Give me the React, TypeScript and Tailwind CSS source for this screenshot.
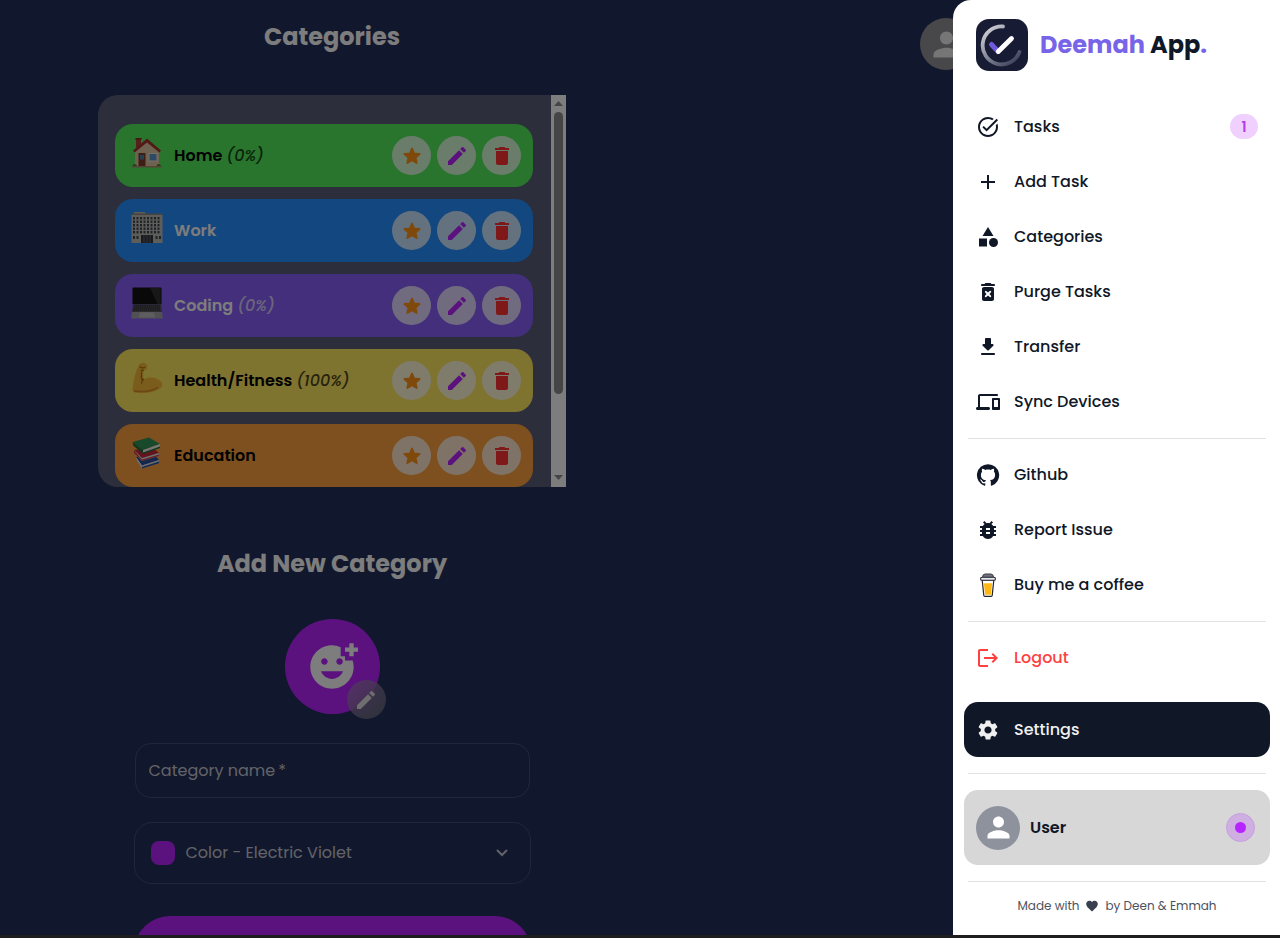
import type { ReactNode } from "react";
import {
  MdAdd,
  MdAddReaction,
  MdBugReport,
  MdCategory,
  MdDelete,
  MdEdit,
  MdFavorite,
  MdLogout,
  MdPerson,
  MdSettings,
  MdTaskAlt,
} from "react-icons/md";

function Glyph({ d, size = 24 }: { d: string; size?: number }) {
  return (
    <svg width={size} height={size} viewBox="0 0 24 24" fill="currentColor" aria-hidden="true">
      <path d={d} />
    </svg>
  );
}

const starPath =
  "M12 17.27l4.15 2.51c.76.46 1.69-.22 1.49-1.08l-1.1-4.72 3.67-3.18c.67-.58.31-1.68-.57-1.75l-4.83-.41-1.89-4.46c-.34-.81-1.5-.81-1.84 0L9.19 8.63l-4.83.41c-.88.07-1.24 1.17-.57 1.75l3.67 3.18-1.1 4.72c-.2.86.73 1.54 1.49 1.08l4.15-2.5z";
const purgePath =
  "M6 19c0 1.1.9 2 2 2h8c1.1 0 2-.9 2-2V9c0-1.1-.9-2-2-2H8c-1.1 0-2 .9-2 2v10zm3.17-7.83a1 1 0 0 1 1.41 0L12 12.59l1.42-1.42a1 1 0 1 1 1.41 1.41L13.41 14l1.42 1.42a1 1 0 1 1-1.41 1.41L12 15.41l-1.42 1.42a1 1 0 1 1-1.41-1.41L10.59 14l-1.42-1.42a1 1 0 0 1 0-1.41zM18 4h-2.5l-.71-.71c-.18-.18-.44-.29-.7-.29H9.91c-.26 0-.52.11-.7.29L8.5 4H6c-.55 0-1 .45-1 1s.45 1 1 1h12c.55 0 1-.45 1-1s-.45-1-1-1z";
const transferPath =
  "M16.59 9H15V4c0-.55-.45-1-1-1h-4c-.55 0-1 .45-1 1v5H7.41c-.89 0-1.34 1.08-.71 1.71l4.59 4.59c.39.39 1.02.39 1.41 0l4.59-4.59c.63-.63.19-1.71-.7-1.71zM5 19c0 .55.45 1 1 1h12c.55 0 1-.45 1-1s-.45-1-1-1H6c-.55 0-1 .45-1 1z";
const devicesPath =
  "M4 6h17c.55 0 1-.45 1-1s-.45-1-1-1H4c-1.1 0-2 .9-2 2v11h-.5c-.83 0-1.5.67-1.5 1.5S.67 20 1.5 20h11c.83 0 1.5-.67 1.5-1.5s-.67-1.5-1.5-1.5H4V6zm19 2h-6c-.55 0-1 .45-1 1v10c0 .55.45 1 1 1h6c.55 0 1-.45 1-1V9c0-.55-.45-1-1-1zm-1 9h-4v-7h4v7z";
const githubPath =
  "M12 1.27a11 11 0 00-3.48 21.46c.55.09.73-.28.73-.55v-1.84c-3.03.64-3.67-1.46-3.67-1.46-.55-1.29-1.28-1.65-1.28-1.65-.92-.65.1-.65.1-.65 1.1 0 1.73 1.1 1.73 1.1.92 1.65 2.57 1.2 3.21.92a2 2 0 01.64-1.47c-2.47-.27-5.04-1.19-5.04-5.5 0-1.1.46-2.1 1.2-2.84a3.76 3.76 0 010-2.93s.91-.28 3.11 1.1c1.8-.49 3.7-.49 5.5 0 2.1-1.38 3.02-1.1 3.02-1.1a3.76 3.76 0 01.1 2.93c.83.74 1.2 1.74 1.2 2.94 0 4.21-2.57 5.13-5.04 5.4.45.37.82.92.82 2.02v3.03c0 .27.1.64.73.55A11 11 0 0012 1.27";

function CoffeeCup() {
  return (
    <svg width="24" height="24" viewBox="0 0 24 24" aria-hidden="true">
      <path d="M6.200 7 7.800 22.500q.1 .9 1 .9h6.400q.9 0 1-.9L17.800 7z" fill="#fff" stroke="#23242c" strokeWidth="1.200" />
      <path d="M7.900 10.200h8.200L15 21.800H9z" fill="#ffb813" />
      <rect x="4.600" y="4.300" width="14.800" height="3" rx="1.400" fill="#e6e7ea" stroke="#23242c" strokeWidth="1.100" />
      <path d="M6.500 4.200Q6.800 1 9 1h6q2.200 0 2.500 3.200z" fill="#70737d" stroke="#3b3d47" strokeWidth="1" />
    </svg>
  );
}

function HouseEmoji() {
  return (
    <svg width="32" height="32" viewBox="0 0 32 32" aria-hidden="true">
      <rect x="5" y="1.5" width="5" height="9" fill="#b23f34" />
      <rect x="4.4" y="1" width="6.2" height="1.8" fill="#8d2f2a" />
      <path d="M4 15 16 4l12 11v15H4z" fill="#e0c4a2" />
      <path d="M16 1.5 2 13.500l1.600 2L16 5.500l12.400 10 1.600-2z" fill="#a5342f" />
      <rect x="7.500" y="16" width="7" height="14" fill="#7c3b28" />
      <rect x="9" y="18" width="4" height="4.500" fill="#4b7fa6" />
      <rect x="17.500" y="16" width="9" height="8.500" fill="#efe2cf" />
      <rect x="18.500" y="17" width="7" height="6.500" fill="#5a94c8" />
      <path d="M1 30q1-4 4-2.500l2 2.500zM25 30q1-4 4-2.500l2 2.500z" fill="#4e7a32" />
      <rect x="1" y="29" width="30" height="1.500" fill="#a98b6c" />
    </svg>
  );
}

const windowColumns = [3, 6.5, 10, 13.5, 17, 20.5, 24, 27.5];
const windowRows = [5, 8.5, 12, 15.5, 19];

function OfficeEmoji() {
  return (
    <svg width="32" height="32" viewBox="0 0 32 32" aria-hidden="true">
      <rect x="3" y="0" width="11" height="3" fill="#b9b7ad" />
      <rect x="0.500" y="1.500" width="31" height="2" fill="#8d8b84" />
      <rect x="0.500" y="3" width="31" height="28" fill="#bdbbb2" />
      {windowRows.map((y) =>
        windowColumns.map((x) => <rect key={`${x}-${y}`} x={x - 1} y={y} width="2" height="2.400" fill="#3c4654" />),
      )}
      <rect x="10" y="23" width="12" height="8" fill="#33363c" />
      <path d="M13 23v8M16 23v8M19 23v8" stroke="#8a8d92" strokeWidth=".6" />
      <path d="M3 24v3M6.500 24v3M25.500 24v3M29 24v3" stroke="#3c4654" strokeWidth="2" />
    </svg>
  );
}

function LaptopEmoji() {
  return (
    <svg width="32" height="32" viewBox="0 0 32 32" aria-hidden="true">
      <rect x="1.500" y="0.500" width="29" height="17" rx="1" fill="#121212" />
      <path d="M19 1h10.500v16h-3z" fill="#303030" />
      <path d="M2 17.500h28L31 25H1z" fill="#58595e" />
      <path d="M3 19h26M2.500 21h27M2.200 23h27.600" stroke="#202124" strokeWidth="1.200" strokeDasharray="1.600 .5" />
      <path d="M1 25h30l.8 6.500H.2z" fill="#a3a3a8" />
      <path d="M9 25.500h14l1 5H8z" fill="#bdbdc2" />
    </svg>
  );
}

function MuscleEmoji() {
  return (
    <svg width="32" height="32" viewBox="0 0 32 32" aria-hidden="true">
      <path
        d="M7.800 3.500C8.600 1 11.500.3 13.700 1.300c2.200.9 3 2.700 2.400 4.600-.5 1.500-1.800 2.300-3.300 2.100-.8 2.700-.9 6-.1 9.200 4.900-2.600 11.900-2.300 16.400 1.600 2.900 2.500 2.600 5.800-.7 8-6.400 4.200-15.900 5.100-24.400 3.700-1.900-.3-2.600-1.600-2.400-3.400C2.500 19.500 4.200 9.500 7.800 3.500z"
        fill="#f5b93a"
      />
      <path
        d="M12.700 17.200c-1.200 1.300-1.900 2.500-2.100 4M9 4.800c1.500 1.200 3.300 1.300 4.800.3M10 8c1 .5 1.900.5 2.800 0M10.800 9.500c-.8 3.500-.7 6.800.4 9.600"
        fill="none"
        stroke="#a96f16"
        strokeWidth="1.100"
        strokeLinecap="round"
      />
      <path d="M3 28.800c8 1.600 17 .6 24-3.300" fill="none" stroke="#d98f28" strokeWidth="1.500" />
    </svg>
  );
}

function BooksEmoji() {
  return (
    <svg width="32" height="32" viewBox="0 0 32 32" aria-hidden="true">
      <path d="m5 20 17-4 6 7-17 5.500z" fill="#284f9e" />
      <path d="m5 20 6 8.500L28 23v3l-17 5.500L6 24z" fill="#dbdde5" />
      <path d="m11 30 17-5.500v1.800L11 31.500z" fill="#284f9e" />
      <path d="m3 13 18-3 7 6-17 5z" fill="#c62b36" />
      <path d="m3 13 8 8 17-5v3L11 24l-7-7z" fill="#e9e3dc" />
      <path d="m11 22.500 17-5V19l-17 5-8-8v-3z" fill="#c62b36" opacity=".85" />
      <path d="M1.500 5 18 .5 29 7l-17 6z" fill="#2f9254" />
      <path d="m12 13 17-6v3.500L12 16z" fill="#efeee6" />
      <path d="M1.500 5 12 13v3.500L2.500 9z" fill="#1f6e3e" />
      <path d="m12 15.500 17-6v1.600L12 17z" fill="#1f6e3e" />
    </svg>
  );
}

type Category = { name: string; percent?: string; tone: string; icon: ReactNode };

const categories: Category[] = [
  { name: "Home", percent: "(0%)", tone: "bg-[#52ea5a] text-black", icon: <HouseEmoji /> },
  { name: "Work", tone: "bg-[#248eff] text-[#fafafa]", icon: <OfficeEmoji /> },
  { name: "Coding", percent: "(0%)", tone: "bg-[#865ef6] text-[#fafafa]", icon: <LaptopEmoji /> },
  { name: "Health/Fitness", percent: "(100%)", tone: "bg-[#ffe660] text-black", icon: <MuscleEmoji /> },
  { name: "Education", tone: "bg-[#ffa03e] text-black", icon: <BooksEmoji /> },
];

function RoundAction({ label, tone, children }: { label: string; tone: string; children: ReactNode }) {
  return (
    <button
      type="button"
      aria-label={label}
      className={`flex size-[39px] items-center justify-center rounded-full bg-white/75 ${tone}`}
    >
      {children}
    </button>
  );
}

function CategoryRow({ category }: { category: Category }) {
  return (
    <li className={`flex h-[63px] shrink-0 items-center rounded-[18px] pr-3 pl-4 ${category.tone}`}>
      <span className="mr-[11px] mb-[6px] shrink-0">{category.icon}</span>
      <span className="flex-1 text-base font-semibold">
        {category.name}
        {category.percent && <span className="ml-1 font-medium italic opacity-70">{category.percent}</span>}
      </span>
      <span className="flex gap-[6px]">
        <RoundAction label={`Favorite ${category.name}`} tone="text-[#ff9318]">
          <Glyph d={starPath} />
        </RoundAction>
        <RoundAction label={`Edit ${category.name}`} tone="text-[#b624ff]">
          <MdEdit size={24} />
        </RoundAction>
        <RoundAction label={`Delete ${category.name}`} tone="text-[#ff3131]">
          <MdDelete size={24} />
        </RoundAction>
      </span>
    </li>
  );
}

function ScrollTrack() {
  return (
    <div aria-hidden="true" className="flex w-[15px] shrink-0 flex-col items-center bg-[#fafafa]">
      <svg width="15" height="17" viewBox="0 0 15 17" fill="#8b8b8b">
        <path d="M3 11h9L7.500 6z" />
      </svg>
      <div className="h-[282px] w-[9px] rounded-full bg-[#8b8b8b]" />
      <div className="flex-1" />
      <svg width="15" height="17" viewBox="0 0 15 17" fill="#8b8b8b">
        <path d="M3 5h9l-4.500 5z" />
      </svg>
    </div>
  );
}

function NavItem({
  icon,
  label,
  tone = "text-[#101727]",
  badge,
}: {
  icon: ReactNode;
  label: string;
  tone?: string;
  badge?: string;
}) {
  return (
    <a href="#" className={`flex min-h-[55px] items-center rounded-[14px] px-3 text-base font-medium ${tone}`}>
      <span className="mr-[14px] flex size-6 items-center justify-center">{icon}</span>
      <span className="flex-1">{label}</span>
      {badge && (
        <span className="flex h-[25px] w-7 items-center justify-center rounded-full bg-[#efd0fe] text-sm font-semibold text-[#b33be8]">
          {badge}
        </span>
      )}
    </a>
  );
}

function Divider() {
  return <hr className="mx-1 border-t border-[#e1e1e3]" />;
}

function Drawer() {
  return (
    <aside className="absolute inset-y-0 right-0 flex w-[327px] flex-col rounded-tl-[18px] bg-white pr-[10px] pl-[11px]">
      <div className="mt-[19px] mb-[28px] flex items-center gap-3 px-3">
        <svg width="52" height="52" viewBox="0 0 52 52" aria-hidden="true">
          <defs>
            <linearGradient id="ring" x1="0.1" y1="0.1" x2="0.8" y2="1">
              <stop offset="0" stopColor="#c9cad2" />
              <stop offset="1" stopColor="#41455c" />
            </linearGradient>
          </defs>
          <rect width="52" height="52" rx="13" fill="#171c34" />
          <path
            d="M27 7.500A19 19 0 1 0 43.500 33"
            fill="none"
            stroke="url(#ring)"
            strokeWidth="3.800"
            strokeLinecap="round"
          />
          <path d="M15.500 25.500 22 32.500" stroke="#6f59dd" strokeWidth="5" strokeLinecap="round" />
          <path d="M22.300 32.500 35.500 19.500" stroke="#fff" strokeWidth="4.800" strokeLinecap="round" />
        </svg>
        <p className="text-2xl font-bold text-[#101727]">
          <span className="text-[#7764e8]">Deemah</span> App<span className="text-[#7764e8]">.</span>
        </p>
      </div>

      <nav className="flex flex-col">
        <NavItem icon={<MdTaskAlt size={24} />} label="Tasks" badge="1" />
        <NavItem icon={<MdAdd size={24} />} label="Add Task" />
        <NavItem icon={<MdCategory size={24} />} label="Categories" />
        <NavItem icon={<Glyph d={purgePath} />} label="Purge Tasks" />
        <NavItem icon={<Glyph d={transferPath} />} label="Transfer" />
        <NavItem icon={<Glyph d={devicesPath} />} label="Sync Devices" />
        <div className="mt-[9px] mb-2">
          <Divider />
        </div>
        <NavItem icon={<Glyph d={githubPath} />} label="Github" />
        <NavItem icon={<MdBugReport size={24} />} label="Report Issue" />
        <NavItem icon={<CoffeeCup />} label="Buy me a coffee" />
        <div className="mt-[9px] mb-2">
          <Divider />
        </div>
        <NavItem icon={<MdLogout size={24} />} label="Logout" tone="text-[#ff4040]" />
      </nav>

      <div className="mt-[17px] flex flex-col gap-4">
        <NavItem icon={<MdSettings size={24} />} label="Settings" tone="bg-[#101727] text-[#f0f0f0]" />
        <Divider />
        <button type="button" className="flex h-[75px] items-center rounded-[14px] bg-[#d7d7d7] pr-[15px] pl-3">
          <span className="mr-[10px] flex size-11 items-center justify-center rounded-full bg-[#8e929c] text-white">
            <MdPerson size={33} />
          </span>
          <span className="flex-1 text-left text-base font-semibold text-[#101727]">User</span>
          <span className="flex size-[29px] items-center justify-center rounded-full border border-[#c79fe0] bg-[#cfaee2]">
            <span className="size-[11px] rounded-full bg-[#b624ff]" />
          </span>
        </button>
        <Divider />
        <p className="flex items-center justify-center text-xs text-[#4d525e]">
          Made with <MdFavorite size={14} className="mx-[6px] text-[#3a404e]" /> by Deen &amp; Emmah
        </p>
      </div>
    </aside>
  );
}

export default function App() {
  return (
    <div className="flex h-screen flex-col font-['Poppins','Inter',sans-serif]">
      <div className="relative flex-1 overflow-hidden bg-[#232e58]">
        <div className="flex items-start justify-between pr-[308px] pl-[98px] text-[#fafafa]">
          <main className="flex w-[468px] flex-col items-center">
            <h1 className="mt-[19px] text-2xl leading-9 font-bold">Categories</h1>
            <div className="mt-[40px] flex h-[392px] w-full overflow-hidden rounded-l-[20px] bg-[#585c78]">
              <ul className="flex min-w-0 flex-1 flex-col gap-3 overflow-hidden pt-[29px] pr-[18px] pl-[17px]">
                {categories.map((category) => (
                  <CategoryRow key={category.name} category={category} />
                ))}
              </ul>
              <ScrollTrack />
            </div>

            <h2 className="mt-[59px] text-2xl leading-9 font-bold">Add New Category</h2>
            <div className="relative mt-[37px]">
              <button
                type="button"
                aria-label="Choose emoji"
                className="flex size-[95px] items-center justify-center rounded-full bg-[#b624ff] text-[#fafafa]"
              >
                <MdAddReaction size={52} />
              </button>
              <button
                type="button"
                aria-label="Edit emoji"
                className="absolute -right-[6px] -bottom-[5px] flex size-[39px] items-center justify-center rounded-full bg-[#9c9c9c]/50 text-[#dcdcdc] backdrop-blur-md"
              >
                <MdEdit size={24} />
              </button>
            </div>

            <form className="mt-[29px] flex w-[397px] flex-col">
              <input
                aria-label="Category name"
                type="text"
                required
                placeholder={"Category name\u2009*"}
                className="mx-px h-[55px] rounded-[16px] border border-[#444d70] bg-transparent px-[13px] text-base outline-none placeholder:text-[#c5c7d0]"
              />
              <div className="mt-6 flex h-[62px] items-center rounded-[18px] border border-[#444d70] px-4">
                <span className="size-6 rounded-lg bg-[#b624ff]" />
                <select
                  aria-label="Color"
                  className="ml-[11px] flex-1 appearance-none bg-transparent text-base text-[#c5c7d0] outline-none"
                >
                  <option>Color - Electric Violet</option>
                </select>
                <svg width="24" height="24" viewBox="0 0 24 24" fill="none" stroke="#c5c7d0" strokeWidth="2" aria-hidden="true">
                  <path d="m7 9 5 5 5-5" />
                </svg>
              </div>
              <button
                type="submit"
                aria-label="Create category"
                className="mt-8 h-[72px] rounded-[36px] bg-[#b624ff]"
              />
            </form>
          </main>
          <button
            type="button"
            aria-label="Account"
            className="mt-[18px] flex size-[52px] items-center justify-center rounded-full bg-[#909094] text-[#ececec]"
          >
            <MdPerson size={39} />
          </button>
        </div>
        <div className="absolute inset-0 bg-black/50" />
        <Drawer />
      </div>
      <div className="h-[3px] bg-[#1e1e20]" />
    </div>
  );
}
